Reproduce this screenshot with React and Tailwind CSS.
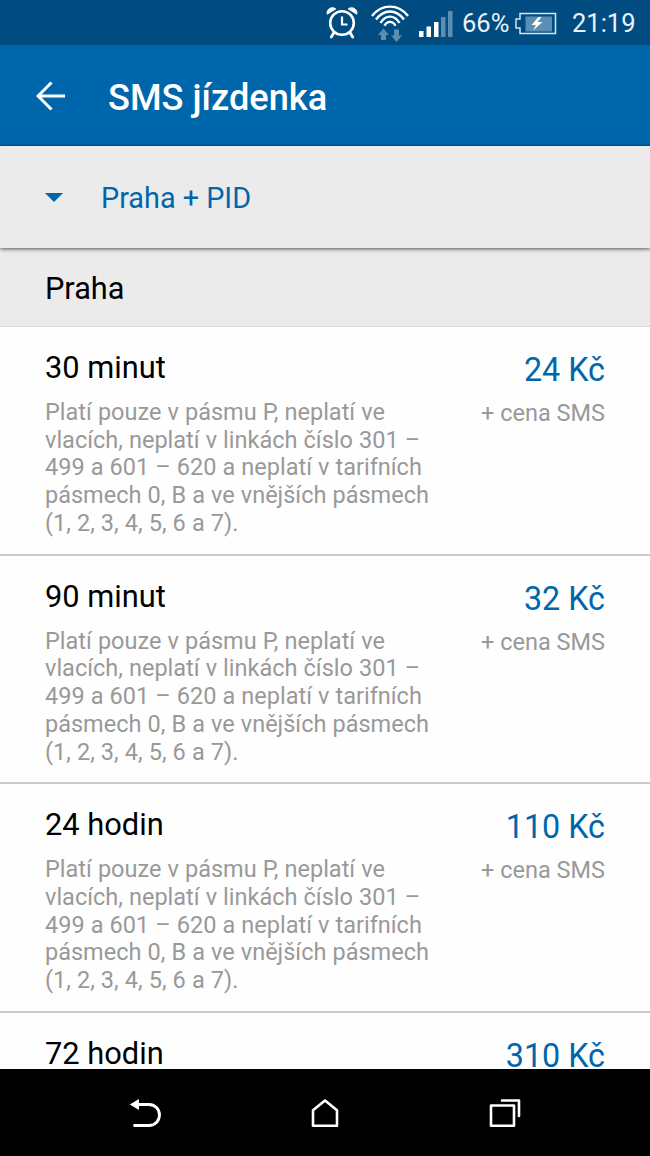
import React from "react";

const NOTE =
  "Platí pouze v pásmu P, neplatí ve vlacích, neplatí v linkách číslo 301 – 499 a 601 – 620 a neplatí v tarifních pásmech 0, B a ve vnějších pásmech (1, 2, 3, 4, 5, 6 a 7).";

const TICKETS = [
  { name: "30 minut", price: "24 Kč", surcharge: "+ cena SMS", note: NOTE },
  { name: "90 minut", price: "32 Kč", surcharge: "+ cena SMS", note: NOTE },
  { name: "24 hodin", price: "110 Kč", surcharge: "+ cena SMS", note: NOTE },
  { name: "72 hodin", price: "310 Kč" },
];

function AlarmIcon() {
  return (
    <svg className="ml-[326px] h-[34px] w-8 shrink-0" viewBox="0 0 32 34" fill="none" stroke="#fff">
      <circle cx="16" cy="17" r="11.8" strokeWidth="2.6" />
      <path d="M16 10.5v8h5.500" strokeWidth="2.2" />
      <path d="M8 26.5L5.3 31M24 26.5l2.700 4.5" strokeWidth="2.8" strokeLinecap="round" />
      <path d="M1.2 8.2C0 3 6 0 9.8 2.9zM30.8 8.2C32 3 26 0 22.2 2.9z" fill="#fff" strokeWidth="1" strokeLinejoin="round" />
    </svg>
  );
}

function WifiIcon() {
  return (
    <svg className="ml-3 h-10 w-10 shrink-0" viewBox="0 0 40 40" fill="none" stroke="#fff" strokeWidth="2.400">
      <path d="M2 13C11.500 .5 28.500 .5 38 13" />
      <path d="M6 16.500C13.800 5.800 26.200 5.800 34 16.500" />
      <path d="M10.500 20C15.500 11.500 24.500 11.500 29.500 20" />
      <path d="M14.500 22.800C17.200 17.500 22.800 17.500 25.500 22.800" />
      <path d="M13.500 25.500l5.500 6.500h-3v5h-5v-5H8zM26.500 39l-5.500-6.500h3v-6h5v6h3z" fill="#5c8db3" stroke="none" />
    </svg>
  );
}

function SignalIcon() {
  return (
    <svg className="mt-[2px] ml-[9px] h-[27px] w-[34px] shrink-0" viewBox="0 0 34 27">
      <path d="M0 20h4.500v6H0zM7.500 15.500H12V26H7.500zM15 11h4.500v15H15z" fill="#fff" />
      <path d="M22 6h4.500v20H22zM29 0h4.500v26H29z" fill="#5c8db3" />
    </svg>
  );
}

function BatteryIcon() {
  return (
    <svg className="h-[23px] w-[42px] shrink-0" viewBox="0 0 42 23" fill="none">
      <path d="M5 1.500h35.500v20H5v-5.500H1V7h4z" stroke="#d5e4ee" strokeWidth="1.500" />
      <path d="M10.500 4.500H37v15H10.500z" fill="#5c8db3" />
      <path d="M23.500 5l-7 8h4.500l-3 5.500 9.500-8.500h-5l4-5z" fill="#fff" />
    </svg>
  );
}

function StatusBar() {
  return (
    <div className="flex h-[45px] shrink-0 items-center bg-[#004c80] pt-px text-[25.500px] leading-[30px] text-[#e9f2f8]">
      <AlarmIcon />
      <WifiIcon />
      <SignalIcon />
      <span className="ml-[9px] w-[53px] shrink-0 whitespace-nowrap">66%</span>
      <BatteryIcon />
      <span className="ml-[15px] whitespace-nowrap">21:19</span>
    </div>
  );
}

function AppBar() {
  return (
    <header className="flex h-[101px] shrink-0 items-center border-b border-[#005a99] bg-[#0066ab] pt-[2px] pl-9 text-white">
      <svg className="h-[30px] w-[30px]" viewBox="0 0 30 30" fill="none" stroke="#fff" strokeWidth="3">
        <path d="M29 15H3M15.500 1.500L2 15l13.500 13.500" />
      </svg>
      <h1 className="ml-[42px] pt-[3px] text-[36.200px] leading-[44px] font-medium">SMS jízdenka</h1>
    </header>
  );
}

function CityPicker() {
  return (
    <button className="relative z-10 flex h-[102px] w-full shrink-0 items-center bg-[#ebebeb] pl-[45px] text-left text-[#0066ab] shadow-[0_1px_4px_rgba(0,0,0,0.65)]">
      <svg className="h-[9px] w-[18px]" viewBox="0 0 18 9">
        <path d="M0 0h18L9 9z" fill="#0066ab" />
      </svg>
      <span className="ml-[38px] pt-[2px] text-[28.800px] leading-9">Praha + PID</span>
    </button>
  );
}

function Ticket({ name, price, surcharge, note }) {
  return (
    <li className="flex h-[228.700px] shrink-0 justify-between border-b-2 border-[#cbcbcb] bg-[#fefefe] px-[45px]">
      <div className="w-[400px] pt-[23px]">
        <h3 className="text-[30.800px] leading-9 text-black">{name}</h3>
        {note && <p className="mt-[13px] text-[23.500px] leading-[27.700px] [word-spacing:0.25px] text-[#999]">{note}</p>}
      </div>
      <div className="pt-[24px] text-right whitespace-nowrap">
        <div className="text-[32.300px] leading-[38px] text-[#0066ab]">{price}</div>
        {surcharge && <div className="mt-[11px] text-[23.500px] leading-[27.700px] text-[#999]">{surcharge}</div>}
      </div>
    </li>
  );
}

function NavBar() {
  return (
    <nav className="flex h-[87px] shrink-0 items-center justify-between bg-black px-[129px]">
      <svg className="h-8 w-8" viewBox="0 0 32 32" fill="none" stroke="#fff" strokeWidth="2.800">
        <path d="M8 7.500h12a10.500 10.500 0 0 1 0 21H5.500" strokeLinecap="round" />
        <path d="M.8 7.500L10 2v11z" fill="#fff" stroke="none" />
      </svg>
      <svg className="h-8 w-8" viewBox="0 0 32 32" fill="none" stroke="#fff" strokeWidth="2.600" strokeLinejoin="round">
        <path d="M16 3.500l12 9.700v15.500H4V13.200z" />
      </svg>
      <svg className="h-8 w-8" viewBox="0 0 32 32" fill="none" stroke="#fff" strokeWidth="2.600" strokeLinejoin="round" strokeLinecap="round">
        <path d="M2 8.500h23v20.200H2zM13 3.500h17v15.500" />
      </svg>
    </nav>
  );
}

export default function App() {
  return (
    <div className="flex h-[1156px] w-[650px] flex-col overflow-hidden bg-[#fefefe] font-['Roboto',sans-serif]">
      <StatusBar />
      <AppBar />
      <CityPicker />
      <main className="flex min-h-0 flex-1 flex-col overflow-hidden">
        <h2 className="flex h-[79px] shrink-0 items-center border-b border-[#dadada] bg-[#ebebeb] pt-[5px] pl-[45px] text-[30.700px] text-black">
          Praha
        </h2>
        <ul className="flex flex-col">
          {TICKETS.map((ticket) => (
            <Ticket key={ticket.name} {...ticket} />
          ))}
        </ul>
      </main>
      <NavBar />
    </div>
  );
}
